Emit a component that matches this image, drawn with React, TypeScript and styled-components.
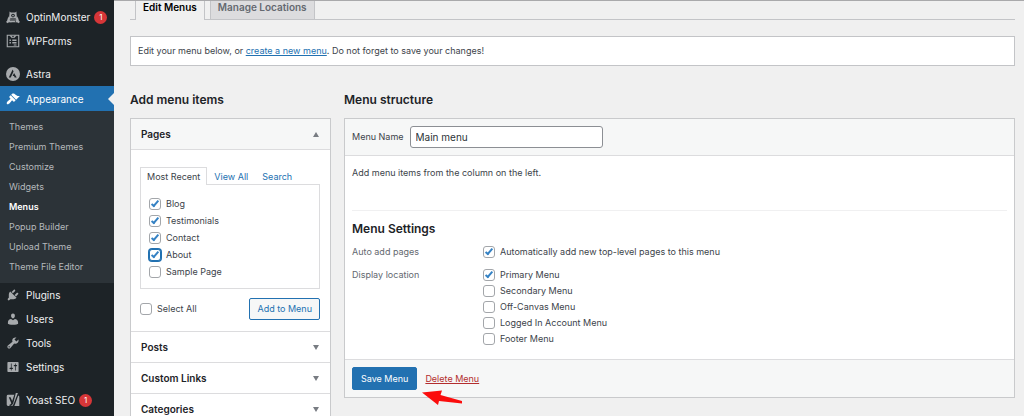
import React, { useState } from "react";
import styled, { createGlobalStyle, css } from "styled-components";

const GlobalStyle = createGlobalStyle`
  *, *::before, *::after { box-sizing: border-box; }
  html { scrollbar-width: none; }
  body {
    margin: 0;
    background: #f0f0f0;
    color: #3c434a;
    font-family: Inter, "Liberation Sans", sans-serif;
    font-size: 9px;
    line-height: 16px;
  }
  h2, h3, p, ul, fieldset { margin: 0; padding: 0; border: 0; }
  ul { list-style: none; }
  a { color: #2271b1; }
`;

const Shell = styled.div`
  display: flex;
  min-height: 100vh;
`;

/* ---------- admin sidebar ---------- */

const Sidebar = styled.nav`
  flex: none;
  width: 114px;
  padding-top: 5px;
  background: #1d2327;
`;

const MenuGroup = styled.ul`
  & + & { margin-top: 9px; }
`;

const MenuLink = styled.a<{ $current?: boolean }>`
  position: relative;
  display: flex;
  align-items: center;
  gap: 6px;
  height: ${(p) => (p.$current ? 25 : 24)}px;
  padding-left: 6px;
  background: ${(p) => (p.$current ? "#2271b1" : "transparent")};
  color: ${(p) => (p.$current ? "#fff" : "#f0f0f1")};
  font-size: 10px;
  text-decoration: none;
  ${(p) =>
    p.$current &&
    css`
      &::after {
        content: "";
        position: absolute;
        right: 0;
        top: 7px;
        border: 6px solid transparent;
        border-left: 0;
        border-right-color: #f0f0f0;
      }
    `}
`;

const MenuIcon = styled.svg<{ $current?: boolean }>`
  flex: none;
  width: 14px;
  height: 14px;
  fill: ${(p) => (p.$current ? "#fff" : "#a7aaad")};
`;

const Badge = styled.span`
  display: grid;
  place-items: center;
  width: 13px;
  height: 13px;
  margin-left: -2px;
  border-radius: 50%;
  background: #d63638;
  color: #fff;
  font-size: 8px;
  line-height: 13px;
`;

const Submenu = styled.ul`
  padding: 6px 0;
  background: #2c3338;
`;

const SubmenuLink = styled.a<{ $current?: boolean }>`
  display: block;
  padding-left: 9px;
  color: ${(p) => (p.$current ? "#fff" : "#b5b9bc")};
  font-weight: ${(p) => (p.$current ? 600 : 400)};
  line-height: 20px;
  text-decoration: none;
`;

/* ---------- page content ---------- */

const Content = styled.main`
  flex: 1;
  min-width: 0;
  padding: 0 9px 0 16px;
  border-top: 1px solid #a9a9ab;
`;

const PageTabs = styled.nav`
  display: flex;
  gap: 5px;
  padding-left: 5px;
  border-bottom: 1px solid #c3c4c7;
`;

const PageTab = styled.a<{ $active?: boolean }>`
  height: ${(p) => (p.$active ? 19 : 18)}px;
  margin-bottom: ${(p) => (p.$active ? -1 : 0)}px;
  padding: 0 7px;
  border: solid #c3c4c7;
  border-width: 0 1px;
  background: ${(p) => (p.$active ? "#f0f0f0" : "#dcdcde")};
  color: ${(p) => (p.$active ? "#000" : "#646970")};
  font-size: 10px;
  font-weight: 600;
  line-height: 13px;
  text-decoration: none;
`;

const Notice = styled.p`
  margin-top: 16px;
  padding: 6px 7px;
  border: 1px solid #c3c4c7;
  background: #fff;
`;

const Columns = styled.div`
  display: grid;
  grid-template-columns: 201px minmax(0, 1fr);
  align-items: start;
  gap: 13px;
  margin-top: 26px;
`;

const Heading = styled.h2`
  color: #1d2327;
  font-size: 12px;
  font-weight: 600;
  line-height: 16px;
`;

const Box = styled.div`
  margin-top: 10px;
  border: 1px solid #c9cacc;
  background: #fff;
`;

const AccordionHead = styled.button<{ $open?: boolean }>`
  display: flex;
  align-items: center;
  justify-content: space-between;
  width: 100%;
  height: 31px;
  padding: 0 11px 0 10px;
  border: 0;
  border-bottom: 1px solid #dcdcde;
  background: ${(p) => (p.$open ? "#f6f7f7" : "#fff")};
  color: #1d2327;
  font: inherit;
  font-size: 10px;
  font-weight: 600;
`;

const Caret = styled.svg<{ $up?: boolean }>`
  width: 6px;
  height: 5px;
  fill: #787c82;
  transform: ${(p) => (p.$up ? "rotate(180deg)" : "none")};
`;

const AccordionBody = styled.div`
  padding: 17px 10px 11px 9px;
  border-bottom: 1px solid #dcdcde;
`;

const InnerTabs = styled.div`
  display: flex;
`;

const InnerTab = styled.a<{ $active?: boolean }>`
  position: relative;
  z-index: 1;
  height: 18px;
  margin-bottom: -1px;
  padding: 0 6px;
  border: 1px solid ${(p) => (p.$active ? "#dcdcde" : "transparent")};
  border-bottom: 0;
  background: ${(p) => (p.$active ? "#fff" : "transparent")};
  color: ${(p) => (p.$active ? "#3c434a" : "#2271b1")};
  line-height: 18px;
  text-decoration: none;
`;

const PagePanel = styled.ul`
  padding: 10px 8px 8px;
  border: 1px solid #dcdcde;
`;

const CheckLabel = styled.label<{ $line: number }>`
  display: flex;
  align-items: center;
  gap: 5px;
  height: ${(p) => p.$line}px;
`;

const Checkbox = styled.input.attrs({ type: "checkbox" })<{ $focus?: boolean }>`
  appearance: none;
  display: grid;
  justify-items: center;
  flex: none;
  width: 12px;
  height: 12px;
  margin: 0;
  border: 1px solid ${(p) => (p.$focus ? "#2271b1" : "#a3a6aa")};
  border-radius: 3px;
  background: #fff;
  box-shadow: ${(p) => (p.$focus ? "0 0 0 1px #2271b1" : "none")};
  &:checked::before {
    content: "";
    width: 4px;
    height: 8px;
    border: solid #3582c4;
    border-width: 0 2px 2px 0;
    transform: rotate(40deg);
  }
`;

const BoxActions = styled.div`
  display: flex;
  align-items: center;
  justify-content: space-between;
  margin-top: 9px;
`;

const Button = styled.button<{ $primary?: boolean }>`
  height: ${(p) => (p.$primary ? 23 : 22)}px;
  padding: 0 ${(p) => (p.$primary ? 8 : 7)}px;
  border: 1px solid #2271b1;
  border-radius: 2px;
  background: ${(p) => (p.$primary ? "#2271b1" : "#f6f7f7")};
  color: ${(p) => (p.$primary ? "#fff" : "#2271b1")};
  font: inherit;
`;

const MenuHeader = styled.div`
  display: flex;
  align-items: center;
  gap: 6px;
  padding: 7px;
  border-bottom: 1px solid #dcdcde;
  background: #f6f7f7;
`;

const TextInput = styled.input`
  width: 193px;
  height: 22px;
  padding: 0 5px;
  border: 1px solid #8c8f94;
  border-radius: 3px;
  background: #fff;
  color: #2c3338;
  font: inherit;
  font-size: 10px;
`;

const MenuBody = styled.div`
  padding: 9px 7px 12px;
`;

const Settings = styled.section`
  margin-top: 29px;
  padding-top: 10px;
  border-top: 1px solid #f0f0f1;
`;

const SettingRow = styled.fieldset`
  display: grid;
  grid-template-columns: 131px minmax(0, 1fr);
  margin-top: 7px;
`;

const SettingName = styled.span`
  color: #646970;
`;

const MenuFooter = styled.div`
  position: relative;
  display: flex;
  align-items: center;
  gap: 8px;
  padding: 7px;
  border-top: 1px solid #dcdcde;
  background: #f6f7f7;
`;

const DeleteLink = styled.a`
  color: #b32d2e;
`;

const Arrow = styled.svg`
  position: absolute;
  left: 77px;
  top: 29px;
  width: 41px;
  height: 16px;
  fill: #fb0d0d;
`;

const icons: Record<string, React.ReactNode> = {
  OptinMonster: (
    <>
      <path d="M5 2l2 1.500h6L15 2v3l1 9H4l1-9z" />
      <path d="M3.500 9L5 14l3 4-4-.5L2.500 19 0 17l1.500-1.500zM16.500 9L15 14l-3 4 4-.5 1.500 1.500 2.500-2-1.500-1.500zM6 15h8v2.500H6z" />
      <circle cx="10" cy="8" r="2.600" fill="#1d2327" />
      <circle cx="10" cy="8" r="1.200" />
      <path d="M6 12h8v1.500H6z" fill="#1d2327" />
    </>
  ),
  WPForms: (
    <>
      <path fillRule="evenodd" d="M1 1h18v18H1zM2.600 2.600v14.800h14.800V2.600z" />
      <path d="M5 2h2.500L10 4.500 12.500 2H15l-3.500 4L10 5 8.500 6zM5 8h2v2H5zM9 8h6v2H9zM5 11.500h2v2H5zM9 11.500h6v2H9zM11 15h4v1.500h-4z" />
    </>
  ),
  Astra: (
    <>
      <circle cx="10" cy="10" r="10" />
      <path d="M9.500 3.500L4 15h2.800l4-8.500zM11.500 8.500L9.500 13h2l.8 2h3z" fill="#1d2327" />
    </>
  ),
  Appearance: (
    <path d="M14.480 11.060L7.410 3.990l1.500-1.500c.5-.56 2.300-.47 3.510.32 1.210.8 1.430 1.280 2.910 2.100 1.180.64 2.450 1.260 4.450.85zm-.71.71L6.700 4.700 4.930 6.470c-.39.39-.39 1.020 0 1.410l1.060 1.060c.39.39.39 1.030 0 1.420-.6.6-1.430 1.110-2.210 1.690-.35.26-.7.53-1.010.84C1.430 14.230.4 16.080 1.400 17.070c.99 1 2.840-.03 4.180-1.360.31-.31.58-.66.85-1.020.57-.78 1.080-1.610 1.690-2.210.39-.39 1.020-.39 1.410 0l1.060 1.060c.39.39 1.020.39 1.410 0z" />
  ),
  Plugins: (
    <path d="M13.110 4.360L9.870 7.600 8 5.730l3.240-3.240c.35-.34 1.050-.2 1.560.32.52.51.66 1.210.31 1.550zm-8 1.770l.91-1.120 9.010 9.010-1.190.84c-.71.71-2.630 1.160-3.820 1.160H6.140L4.900 17.260c-.59.59-1.540.59-2.120 0-.59-.58-.59-1.530 0-2.120l1.240-1.240v-3.880c0-1.130.4-3.190 1.090-3.890zm7.260 3.970l3.240-3.240c.34-.35 1.040-.21 1.550.31.52.51.66 1.210.31 1.550l-3.240 3.250z" />
  ),
  Users: (
    <path d="M10 9.250c-2.270 0-2.730-3.440-2.730-3.440C7 4.020 7.820 2 9.970 2c2.160 0 2.980 2.020 2.710 3.810 0 0-.41 3.440-2.680 3.440zm0 2.570L12.720 10c2.390 0 4.520 2.330 4.520 4.530v2.490s-3.650 1.130-7.240 1.130c-3.650 0-7.240-1.130-7.240-1.130v-2.490c0-2.250 1.940-4.480 4.470-4.480z" />
  ),
  Tools: (
    <path d="M16.680 9.770c-1.340 1.340-3.300 1.670-4.950.99l-5.410 6.520c-.99.99-2.590.99-3.580 0s-.99-2.590 0-3.570l6.520-5.420c-.68-1.650-.35-3.610.99-4.950 1.280-1.280 3.120-1.620 4.720-1.060l-2.890 2.890 2.820 2.820 2.860-2.870c.53 1.580.18 3.390-1.080 4.650zM3.810 16.210c.4.39 1.040.39 1.430 0 .4-.4.4-1.040 0-1.430-.39-.4-1.030-.4-1.430 0-.39.39-.39 1.030 0 1.430z" />
  ),
  Settings: (
    <path d="M18 16V4c0-.55-.45-1-1-1H3c-.55 0-1 .45-1 1v12c0 .55.45 1 1 1h14c.55 0 1-.45 1-1zM8 11h1c.55 0 1 .45 1 1s-.45 1-1 1H8v1.500c0 .28-.22.5-.5.5s-.5-.22-.5-.5V13H6c-.55 0-1-.45-1-1s.45-1 1-1h1V5.500c0-.28.22-.5.5-.5s.5.22.5.5V11zm5-2h-1c-.55 0-1-.45-1-1s.45-1 1-1h1V5.500c0-.28.22-.5.5-.5s.5.22.5.5V7h1c.55 0 1 .45 1 1s-.45 1-1 1h-1v5.500c0 .28-.22.5-.5.5s-.5-.22-.5-.5V9z" />
  ),
  "Yoast SEO": (
    <>
      <path d="M3 2.500h11L9 18.500H3a2 2 0 0 1-2-2v-12a2 2 0 0 1 2-2zM17.500 3.500A2 2 0 0 1 19 5.500v13h-7z" />
      <path d="M4 6h2.500l2.300 5.500L12.800 0h3L10 15.500Q8.500 19 5 19v-2.200q2 0 2.600-2z" fill="#1d2327" />
      <path d="M14 0h3l-6 15.500Q10 18 8.500 18.500l2-4z" />
    </>
  ),
};

type Entry = { name: string; count?: number; current?: boolean; children?: string[] };

const sidebarGroups: Entry[][] = [
  [{ name: "OptinMonster", count: 1 }, { name: "WPForms" }],
  [
    { name: "Astra" },
    {
      name: "Appearance",
      current: true,
      children: [
        "Themes",
        "Premium Themes",
        "Customize",
        "Widgets",
        "Menus",
        "Popup Builder",
        "Upload Theme",
        "Theme File Editor",
      ],
    },
    { name: "Plugins" },
    { name: "Users" },
    { name: "Tools" },
    { name: "Settings" },
  ],
  [{ name: "Yoast SEO", count: 1 }],
];

const pages = ["Blog", "Testimonials", "Contact", "About", "Sample Page"];
const locations = [
  "Primary Menu",
  "Secondary Menu",
  "Off-Canvas Menu",
  "Logged In Account Menu",
  "Footer Menu",
];

function CaretMark({ up }: { up?: boolean }) {
  return (
    <Caret $up={up} viewBox="0 0 6 5" aria-hidden="true">
      <path d="M0 0h6L3 5z" />
    </Caret>
  );
}

function Check(props: { label: string; line: number; checked?: boolean; focus?: boolean }) {
  const [on, setOn] = useState(!!props.checked);
  return (
    <CheckLabel $line={props.line}>
      <Checkbox checked={on} $focus={props.focus} onChange={() => setOn(!on)} />
      {props.label}
    </CheckLabel>
  );
}

function AdminMenu() {
  return (
    <Sidebar aria-label="Main menu">
      {sidebarGroups.map((group) => (
        <MenuGroup key={group[0].name}>
          {group.map((item) => (
            <li key={item.name}>
              <MenuLink href="#" $current={item.current}>
                <MenuIcon viewBox="0 0 20 20" $current={item.current} aria-hidden="true">
                  {icons[item.name]}
                </MenuIcon>
                {item.name}
                {item.count && <Badge>{item.count}</Badge>}
              </MenuLink>
              {item.children && (
                <Submenu>
                  {item.children.map((child) => (
                    <li key={child}>
                      <SubmenuLink href="#" $current={child === "Menus"}>
                        {child}
                      </SubmenuLink>
                    </li>
                  ))}
                </Submenu>
              )}
            </li>
          ))}
        </MenuGroup>
      ))}
    </Sidebar>
  );
}

function AddItems() {
  return (
    <section>
      <Heading>Add menu items</Heading>
      <Box>
        <AccordionHead $open type="button" aria-expanded="true">
          Pages
          <CaretMark up />
        </AccordionHead>
        <AccordionBody>
          <InnerTabs>
            <InnerTab href="#" $active>
              Most Recent
            </InnerTab>
            <InnerTab href="#">View All</InnerTab>
            <InnerTab href="#">Search</InnerTab>
          </InnerTabs>
          <PagePanel>
            {pages.map((page) => (
              <li key={page}>
                <Check
                  label={page}
                  line={17}
                  checked={page !== "Sample Page"}
                  focus={page === "About"}
                />
              </li>
            ))}
          </PagePanel>
          <BoxActions>
            <Check label="Select All" line={16} />
            <Button type="button">Add to Menu</Button>
          </BoxActions>
        </AccordionBody>
        {["Posts", "Custom Links", "Categories"].map((name) => (
          <AccordionHead key={name} type="button" aria-expanded="false">
            {name}
            <CaretMark />
          </AccordionHead>
        ))}
      </Box>
    </section>
  );
}

function MenuStructure() {
  return (
    <section>
      <Heading>Menu structure</Heading>
      <Box>
        <MenuHeader>
          <label htmlFor="menu-name">Menu Name</label>
          <TextInput id="menu-name" type="text" defaultValue="Main menu" />
        </MenuHeader>
        <MenuBody>
          <p>Add menu items from the column on the left.</p>
          <Settings>
            <Heading as="h3">Menu Settings</Heading>
            <SettingRow aria-label="Auto add pages">
              <SettingName>Auto add pages</SettingName>
              <Check
                label="Automatically add new top-level pages to this menu"
                line={16}
                checked
              />
            </SettingRow>
            <SettingRow aria-label="Display location">
              <SettingName>Display location</SettingName>
              <div>
                {locations.map((name, i) => (
                  <Check key={name} label={name} line={16} checked={i === 0} />
                ))}
              </div>
            </SettingRow>
          </Settings>
        </MenuBody>
        <MenuFooter>
          <Button $primary type="button">
            Save Menu
          </Button>
          <DeleteLink href="#">Delete Menu</DeleteLink>
          <Arrow viewBox="0 0 41 16" aria-hidden="true">
            <path d="M0 3.500L20 1.500 18.500 6 40 12v2.500L17 12l-1 4z" />
          </Arrow>
        </MenuFooter>
      </Box>
    </section>
  );
}

export default function App() {
  return (
    <>
      <GlobalStyle />
      <Shell>
        <AdminMenu />
        <Content>
          <PageTabs aria-label="Secondary menu">
            <PageTab href="#" $active>
              Edit Menus
            </PageTab>
            <PageTab href="#">Manage Locations</PageTab>
          </PageTabs>
          <Notice>
            Edit your menu below, or <a href="#">create a new menu</a>. Do not forget to save your
            changes!
          </Notice>
          <Columns>
            <AddItems />
            <MenuStructure />
          </Columns>
        </Content>
      </Shell>
    </>
  );
}
